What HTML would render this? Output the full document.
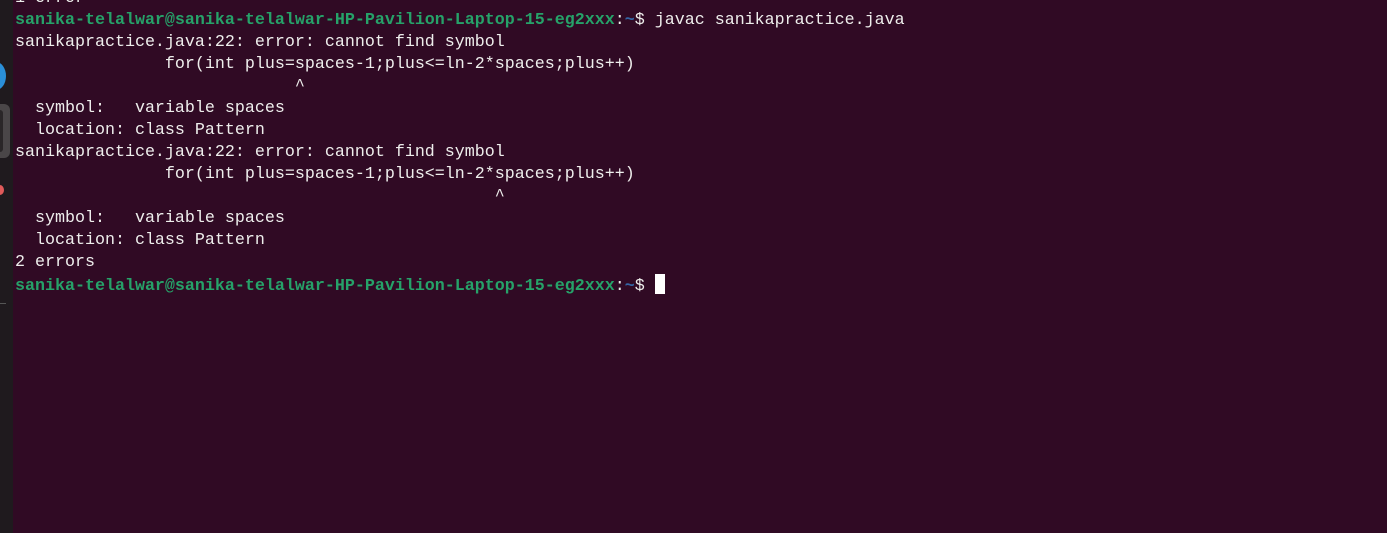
<!DOCTYPE html>
<html><head><style>
body{margin:0;width:1387px;height:533px;background:#300a24;overflow:hidden;position:relative;font-family:"Liberation Mono","DejaVu Sans Mono",monospace;}
#dock{position:absolute;left:0;top:0;width:13px;height:533px;background:#1f1a1e;}
pre{position:absolute;left:15px;top:-12px;margin:0;font-family:inherit;font-size:16.67px;line-height:22px;color:#eeeeec;}
.g{color:#26a269;font-weight:bold}.b{color:#3465a4;font-weight:bold}
.cur{display:inline-block;width:10px;height:20px;background:#fff;vertical-align:-4px}
</style></head><body>
<div id="dock">
<div style="position:absolute;left:-14px;top:62px;width:20px;height:28px;border-radius:50%;background:#2a8fd8"></div>
<div style="position:absolute;left:-6px;top:104px;width:16px;height:54px;border-radius:6px;background:#4a4648"></div>
<div style="position:absolute;left:-6px;top:110px;width:9px;height:42px;border-radius:3px;background:#2a2628"></div>
<div style="position:absolute;left:-4px;top:185px;width:8px;height:10px;border-radius:50%;background:#e05a5a"></div>
<div style="position:absolute;left:0;top:303px;width:6px;height:1px;background:#555"></div>
</div>
<pre>1 error
<span class="g">sanika-telalwar@sanika-telalwar-HP-Pavilion-Laptop-15-eg2xxx</span>:<span class="b">~</span>$ javac sanikapractice.java
sanikapractice.java:22: error: cannot find symbol
               for(int plus=spaces-1;plus&lt;=ln-2*spaces;plus++)
                            ^
  symbol:   variable spaces
  location: class Pattern
sanikapractice.java:22: error: cannot find symbol
               for(int plus=spaces-1;plus&lt;=ln-2*spaces;plus++)
                                                ^
  symbol:   variable spaces
  location: class Pattern
2 errors
<span class="g">sanika-telalwar@sanika-telalwar-HP-Pavilion-Laptop-15-eg2xxx</span>:<span class="b">~</span>$ <span class="cur"></span></pre>
</body></html>
